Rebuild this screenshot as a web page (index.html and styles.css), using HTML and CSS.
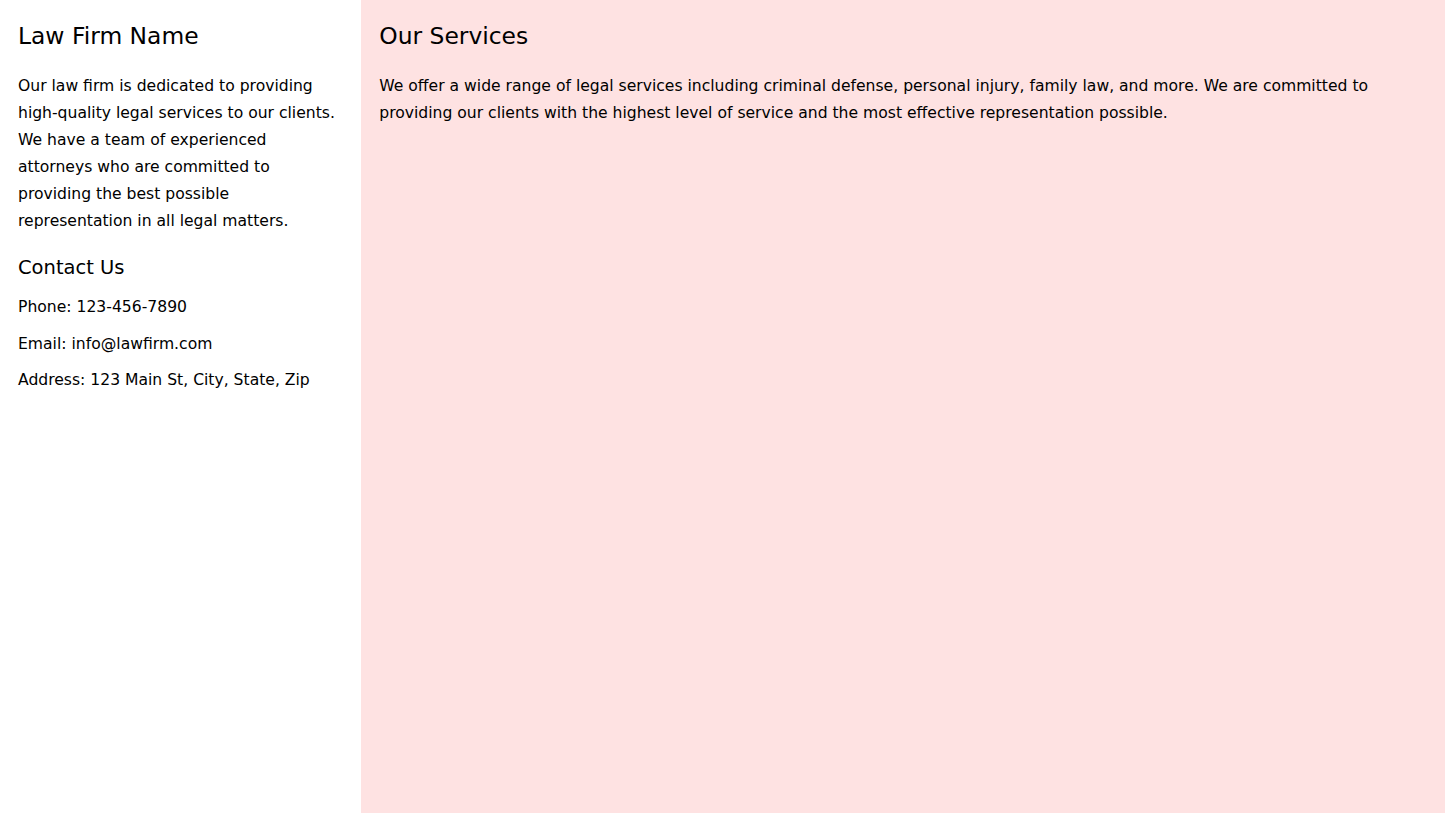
FILE: index.html
```html
<!DOCTYPE html>
<html>
<head>
    <title>Law Firm Name</title>
    <meta name="viewport" content="width=device-width, initial-scale=1.0">
    <link rel="stylesheet" href="styles.css">
</head>
<body>
    <div class="page">
        <aside class="sidebar">
            <h1>Law Firm Name</h1>
            <p class="intro">Our law firm is dedicated to providing high-quality legal services to our clients. We have a team of experienced attorneys who are committed to providing the best possible representation in all legal matters.</p>

            <h2>Contact Us</h2>
            <p class="contact">Phone: 123-456-7890</p>
            <p class="contact">Email: info@lawfirm.com</p>
            <p class="contact">Address: 123 Main St, City, State, Zip</p>
        </aside>

        <main class="content">
            <h1>Our Services</h1>
            <p class="intro">We offer a wide range of legal services including criminal defense, personal injury, family law, and more. We are committed to providing our clients with the highest level of service and the most effective representation possible.</p>
        </main>
    </div>
</body>
</html>
```

FILE: styles.css
```css
body {
    margin: 0;
    padding: 0;
    font-family: "DejaVu Sans", sans-serif;
    color: #000;
    background-color: #ffffff;
}

.page {
    display: flex;
    height: 100vh;
}

.sidebar {
    width: 25%;
    padding: 18px;
    box-sizing: border-box;
    background-color: #ffffff;
}

.content {
    flex: 1;
    padding: 18px;
    background-color: #fee2e2; /* light pink */
}

h1 {
    font-size: 23.4px;
    line-height: 36px;
    font-weight: normal;
    margin: 0 0 19px 0;
}

h2 {
    font-size: 19.5px;
    line-height: 28px;
    font-weight: normal;
    margin: 0 0 12px 0;
}

.intro {
    font-size: 15.6px;
    line-height: 27px;
    margin: 0 0 19px 0;
}

.contact {
    font-size: 15.6px;
    line-height: 27px;
    margin: 0 0 9.5px 0;
}
```
